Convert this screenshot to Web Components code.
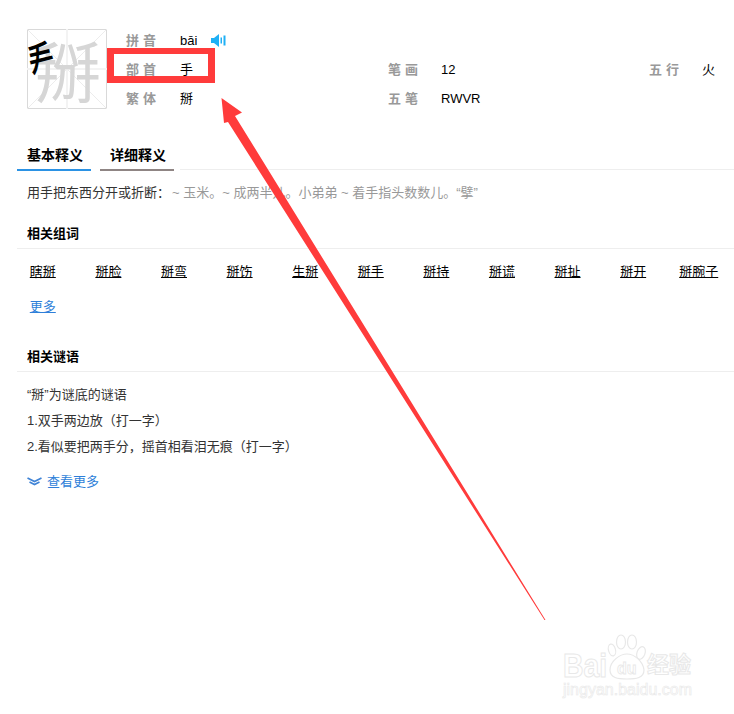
<!DOCTYPE html>
<html lang="zh">
<head>
<meta charset="utf-8">
<title>掰</title>
<style>
    html, body { margin: 0; background: #fff; }
    body {
        position: relative;
        width: 734px;
        height: 714px;
        overflow: hidden;
        font: 13px/26px "Liberation Sans", "Noto Sans CJK SC", sans-serif;
        color: #333;
    }
</style>
</head>
<body>
<zi-header></zi-header>
<zi-tabs></zi-tabs>
<zi-definition></zi-definition>
<zi-section heading="相关组词" gap="10">
    <zi-words words="瞎掰,掰脸,掰弯,掰饬,生掰,掰手,掰持,掰谎,掰扯,掰开,掰腕子"></zi-words>
</zi-section>
<zi-section heading="相关谜语" gap="10">
    <zi-riddles></zi-riddles>
</zi-section>
<zi-annotation></zi-annotation>
<zi-watermark></zi-watermark>

<script>
customElements.define("zi-field", class ZiField extends HTMLElement
{
    constructor()
    {
        super();
        this.attachShadow({mode: 'open'}).innerHTML = `<style>
            :host { display: flex; align-items: center; height: 29px; line-height: 29px; }
            b { width: var(--label-width, 54px); flex: none; color: #999; letter-spacing: 4px; font-size: 13px; }
            span { color: #000; font-size: 13px; }
            slot { display: inline-flex; }
        </style><b>${this.getAttribute("label")}</b><span>${this.getAttribute("value")}</span><slot></slot>`;
    }
});

customElements.define("zi-header", class ZiHeader extends HTMLElement
{
    constructor()
    {
        super();
        this.attachShadow({mode: 'open'}).innerHTML = `<style>
            :host { display: flex; padding: 26px 0 0 27px; height: 89px; }
            .tile { flex: none; width: 80px; height: 80px; margin: 3px 19px 0 0; overflow: visible; }
            .info { display: grid; grid-template-columns: 262px 261px 60px; grid-template-rows: repeat(3, 29px); margin-top: -0.5px; }
            .speak { margin-left: 14px; }
            .r1 { grid-row: 1; }
            .r2 { grid-row: 2; }
            .r3 { grid-row: 3; }
            .c1 { grid-column: 1; }
            .c2 { grid-column: 2; --label-width: 53px; }
            .c3 { grid-column: 3; --label-width: 53px; }
        </style>
        <svg class="tile" viewBox="0 0 80 80" width="80" height="80">
            <rect x=".5" y=".5" width="79" height="79" fill="#fff" stroke="#d9d9d9"/>
            <path d="M0 0 80 80M80 0 0 80" stroke="#ececec" fill="none"/>
            <path d="M40 0V80M0 40H80" stroke="#f3f3f3" stroke-width="2" fill="none"/>
            <text x="8" y="68" font-size="66" fill="#d6d6d6" font-family="'Noto Sans CJK SC'">掰</text>
            <text x="0" y="0" font-size="42" font-weight="500" fill="#000" font-family="'Noto Sans CJK SC'" transform="translate(6 51) rotate(-14) scale(.62 1)">龵</text>
        </svg>
        <div class="info">
            <zi-field class="r1 c1" label="拼音" value="bāi">
                <svg class="speak" width="15" height="13" viewBox="0 0 15 13"><path fill="#1fb0f5" d="M0 4H3L8 0V13L3 9H0ZM9.500 3.500H11V9.500H9.500ZM12.500 1.500H14.500V11.500H12.500Z"/></svg>
            </zi-field>
            <zi-field class="r2 c1" label="部首" value="手"></zi-field>
            <zi-field class="r3 c1" label="繁体" value="掰"></zi-field>
            <zi-field class="r2 c2" label="笔画" value="12"></zi-field>
            <zi-field class="r3 c2" label="五笔" value="RWVR"></zi-field>
            <zi-field class="r2 c3" label="五行" value="火"></zi-field>
        </div>`;
    }
});

customElements.define("zi-tabs", class ZiTabs extends HTMLElement
{
    constructor()
    {
        super();
        this.attachShadow({mode: 'open'}).innerHTML = `<style>
            :host { display: flex; gap: 9px; margin: 23px 0 0 17px; height: 33px; }
            a { width: 64px; padding: 4px 0 0 10px; line-height: 27px; font-weight: 700; color: #000; font-size: 14px; border-bottom: 2px solid #2b92e4; }
            a + a { border-color: #8f8584; }
            i { flex: 1; border-bottom: 1px solid #eee; margin: 0 0 1px -3px; }
        </style><a>基本释义</a><a>详细释义</a><i></i>`;
    }
});

customElements.define("zi-definition", class ZiDefinition extends HTMLElement
{
    constructor()
    {
        super();
        this.attachShadow({mode: 'open'}).innerHTML = `<style>
            :host { display: block; margin: 0 0 14px 27px; padding-top: 9px; line-height: 26px; white-space: nowrap; font-size: 13px; color: #333; }
            span { color: #999; margin-left: 2px; }
        </style>用手把东西分开或折断：<span>~ 玉米。~ 成两半儿。小弟弟 ~ 着手指头数数儿。“擘”</span>`;
    }
});

customElements.define("zi-section", class ZiSection extends HTMLElement
{
    constructor()
    {
        super();
        this.attachShadow({mode: 'open'}).innerHTML = `<style>
            :host { display: block; margin-left: 17px; }
            h2 { margin: 0; padding: 0 0 0 10px; font-size: 13px; line-height: 28px; color: #000; border-bottom: 1px solid #eee; }
            div { padding-top: ${this.getAttribute("gap")}px; }
        </style><h2>${this.getAttribute("heading")}</h2><div><slot></slot></div>`;
    }
});

customElements.define("zi-words", class ZiWords extends HTMLElement
{
    constructor()
    {
        super();
        const words = this.getAttribute("words").split(",");
        this.attachShadow({mode: 'open'}).innerHTML = `<style>
            :host { display: grid; grid-template-columns: repeat(11, 65.6px); justify-items: center; margin-left: -7px; height: 84px; line-height: 26px; grid-auto-rows: 35px; }
            a { color: #000; text-decoration: underline; }
            .more { color: #2e7fd9; }
        </style>${words.map(word => `<a>${word}</a>`).join("")}<a class="more">更多</a>`;
    }
});

customElements.define("zi-riddles", class ZiRiddles extends HTMLElement
{
    constructor()
    {
        super();
        this.attachShadow({mode: 'open'}).innerHTML = `<style>
            :host { display: block; padding-left: 10px; line-height: 26px; color: #333; }
            div { height: 26px; }
            a { display: flex; align-items: center; gap: 5px; margin-top: 9px; color: #2e7fd9; }
            svg { margin-top: -1px; }
        </style>
        <div>“掰”为谜底的谜语</div>
        <div>1.双手两边放（打一字）</div>
        <div>2.看似要把两手分，摇首相看泪无痕（打一字）</div>
        <a><svg width="15" height="9" viewBox="0 0 15 9"><path d="M.5 1 7.500 4.500 14.500 1M2.500 5 7.500 7.500 12.500 5" fill="none" stroke="#3f83d6" stroke-width="1.700"/></svg>查看更多</a>`;
    }
});

customElements.define("zi-annotation", class ZiAnnotation extends HTMLElement
{
    constructor()
    {
        super();
        this.attachShadow({mode: 'open'}).innerHTML = `<style>
            :host { position: absolute; left: 0; top: 0; pointer-events: none; }
            svg { display: block; }
        </style>
        <svg width="734" height="714" viewBox="0 0 734 714">
            <path fill="#ff3b3b" fill-rule="evenodd" d="M107 48H215V83H107ZM114 54V76H208V54Z"/>
            <path fill="#ff3b3b" d="M221.500 98 242 112.500 235 116 545.500 620 544.500 620 228 122 224 123Z"/>
        </svg>`;
    }
});

customElements.define("zi-watermark", class ZiWatermark extends HTMLElement
{
    constructor()
    {
        super();
        this.attachShadow({mode: 'open'}).innerHTML = `<style>
            :host { position: absolute; left: 563px; top: 634px; width: 135px; height: 66px; font-family: "Liberation Sans", "Noto Sans CJK SC", sans-serif; color: #fff; -webkit-text-stroke: 1px #e8e8e8; }
            svg { position: absolute; left: 44px; top: 0; }
            .baidu { position: absolute; left: 0; top: 18px; font: 700 33px/28px "Liberation Sans", sans-serif; transform: scaleX(.86); transform-origin: 0 0; }
            .jy { position: absolute; left: 84px; top: 18px; font-size: 22px; line-height: 26px; font-weight: 700; white-space: nowrap; }
            .url { position: absolute; left: 0; top: 48px; font-size: 16px; line-height: 16px; white-space: nowrap; -webkit-text-stroke: .6px #e8e8e8; }
        </style>
        <span class="baidu">Bai</span>
        <svg width="40" height="48" viewBox="0 0 40 48">
            <g fill="#fff" stroke="#e8e8e8" stroke-width="1.200">
                <ellipse cx="5" cy="16" rx="3.500" ry="6" transform="rotate(-15 5 16)"/>
                <ellipse cx="14" cy="8" rx="4.500" ry="7"/>
                <ellipse cx="25" cy="8" rx="4.500" ry="7"/>
                <ellipse cx="34" cy="19" rx="4" ry="6.500" transform="rotate(20 34 19)"/>
                <path d="M3 36C3 27 13 20 20 20S36 27 37 36C37 44 29 45 20 45S3 44 3 36Z"/>
            </g>
            <text x="10" y="40" font-size="16" font-weight="700" font-family="'Liberation Sans'" fill="#fff" stroke="#e8e8e8" stroke-width=".8">du</text>
        </svg>
        <span class="jy">经验</span>
        <span class="url">jingyan.baidu.com</span>`;
    }
});
</script>
</body>
</html>
